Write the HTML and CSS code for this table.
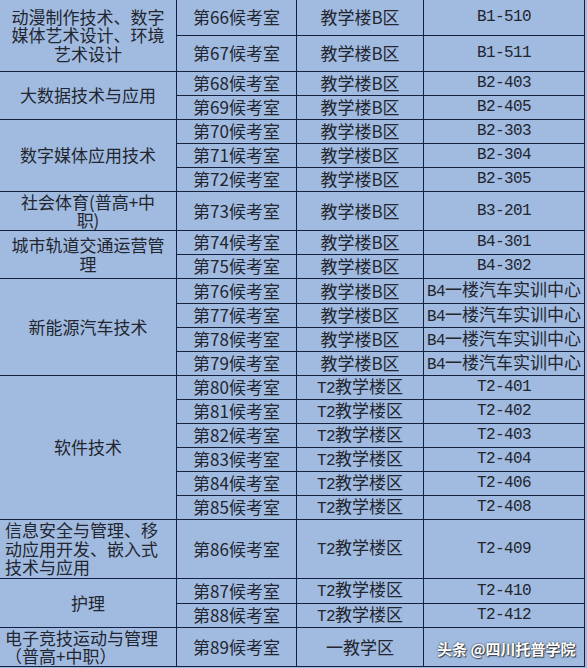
FILE: index.html
```html
<!DOCTYPE html>
<html lang="zh-CN">
<head>
<meta charset="utf-8">
<title>候考室安排</title>
<link rel="stylesheet" href="styles.css">
</head>
<body>
<div class="page">
  <div class="sheet">
    <div class="cell major span2"><span>动漫制作技术、数字<br>媒体艺术设计、环境<br>艺术设计</span></div>
    <div class="cell">第66候考室</div><div class="cell">教学楼B区</div><div class="cell mono">B1-510</div>
    <div class="cell">第67候考室</div><div class="cell">教学楼B区</div><div class="cell mono">B1-511</div>

    <div class="cell major span2">大数据技术与应用</div>
    <div class="cell">第68候考室</div><div class="cell">教学楼B区</div><div class="cell mono">B2-403</div>
    <div class="cell">第69候考室</div><div class="cell">教学楼B区</div><div class="cell mono">B2-405</div>

    <div class="cell major span3">数字媒体应用技术</div>
    <div class="cell">第70候考室</div><div class="cell">教学楼B区</div><div class="cell mono">B2-303</div>
    <div class="cell">第71候考室</div><div class="cell">教学楼B区</div><div class="cell mono">B2-304</div>
    <div class="cell">第72候考室</div><div class="cell">教学楼B区</div><div class="cell mono">B2-305</div>

    <div class="cell major"><span>社会体育(普高+中<br>职)</span></div>
    <div class="cell">第73候考室</div><div class="cell">教学楼B区</div><div class="cell mono">B3-201</div>

    <div class="cell major span2"><span>城市轨道交通运营管<br>理</span></div>
    <div class="cell">第74候考室</div><div class="cell">教学楼B区</div><div class="cell mono">B4-301</div>
    <div class="cell">第75候考室</div><div class="cell">教学楼B区</div><div class="cell mono">B4-302</div>

    <div class="cell major span4">新能源汽车技术</div>
    <div class="cell">第76候考室</div><div class="cell">教学楼B区</div><div class="cell"><span><span class="mono">B4</span>一楼汽车实训中心</span></div>
    <div class="cell">第77候考室</div><div class="cell">教学楼B区</div><div class="cell"><span><span class="mono">B4</span>一楼汽车实训中心</span></div>
    <div class="cell">第78候考室</div><div class="cell">教学楼B区</div><div class="cell"><span><span class="mono">B4</span>一楼汽车实训中心</span></div>
    <div class="cell">第79候考室</div><div class="cell">教学楼B区</div><div class="cell"><span><span class="mono">B4</span>一楼汽车实训中心</span></div>

    <div class="cell major span6">软件技术</div>
    <div class="cell">第80候考室</div><div class="cell"><span><span class="mono">T2</span>教学楼区</span></div><div class="cell mono">T2-401</div>
    <div class="cell">第81候考室</div><div class="cell"><span><span class="mono">T2</span>教学楼区</span></div><div class="cell mono">T2-402</div>
    <div class="cell">第82候考室</div><div class="cell"><span><span class="mono">T2</span>教学楼区</span></div><div class="cell mono">T2-403</div>
    <div class="cell">第83候考室</div><div class="cell"><span><span class="mono">T2</span>教学楼区</span></div><div class="cell mono">T2-404</div>
    <div class="cell">第84候考室</div><div class="cell"><span><span class="mono">T2</span>教学楼区</span></div><div class="cell mono">T2-406</div>
    <div class="cell">第85候考室</div><div class="cell"><span><span class="mono">T2</span>教学楼区</span></div><div class="cell mono">T2-408</div>

    <div class="cell major left"><span>信息安全与管理、移<br>动应用开发、嵌入式<br>技术与应用</span></div>
    <div class="cell">第86候考室</div><div class="cell"><span><span class="mono">T2</span>教学楼区</span></div><div class="cell mono">T2-409</div>

    <div class="cell major span2">护理</div>
    <div class="cell">第87候考室</div><div class="cell"><span><span class="mono">T2</span>教学楼区</span></div><div class="cell mono">T2-410</div>
    <div class="cell">第88候考室</div><div class="cell"><span><span class="mono">T2</span>教学楼区</span></div><div class="cell mono">T2-412</div>

    <div class="cell major left"><span>电子竞技运动与管理<br>（普高+中职）</span></div>
    <div class="cell">第89候考室</div><div class="cell">一教学区</div><div class="cell"></div>
  </div>
  <div class="watermark">头条 @四川托普学院</div>
</div>
</body>
</html>
```

FILE: styles.css
```css
html, body {
  margin: 0;
  padding: 0;
  background: #a0bbdf;
}

.page {
  position: relative;
  width: 587px;
  height: 668px;
  overflow: hidden;
}

.sheet {
  display: grid;
  width: max-content;
  grid-template-columns: 176px 119px 126px 160px;
  grid-template-rows: 35px 35px 23px 23px 23px 23px 23px 38px 23px 23px 24px 23px 23px 23px 23px 23px 23px 23px 23px 23px 58px 24px 23px 38px;
  gap: 1px;
  padding: 0 1px 1px 0;
  background: #16213f;
}

.cell {
  display: flex;
  align-items: center;
  justify-content: center;
  text-align: center;
  background: #a0bbdf;
  color: #23252f;
  font-family: "Noto Sans CJK SC", "Noto Sans", sans-serif;
  font-size: 17px;
  line-height: 18.5px;
  white-space: nowrap;
}

.mono {
  font-family: "Liberation Mono", "Noto Sans CJK SC", monospace;
  font-size: 16px;
  letter-spacing: -0.6px;
}

.major.left {
  justify-content: flex-start;
  text-align: left;
  padding-left: 5px;
}

.span2 { grid-row: span 2; }
.span3 { grid-row: span 3; }
.span4 { grid-row: span 4; }
.span6 { grid-row: span 6; }

.watermark {
  position: absolute;
  left: 437px;
  top: 639px;
  color: #ffffff;
  font-family: "Noto Sans CJK SC", sans-serif;
  font-size: 15px;
  font-weight: 700;
  line-height: 20px;
  white-space: nowrap;
  text-shadow: 0 0 2px rgba(0, 0, 0, 0.75), 1px 1px 1px rgba(0, 0, 0, 0.6);
}
```
